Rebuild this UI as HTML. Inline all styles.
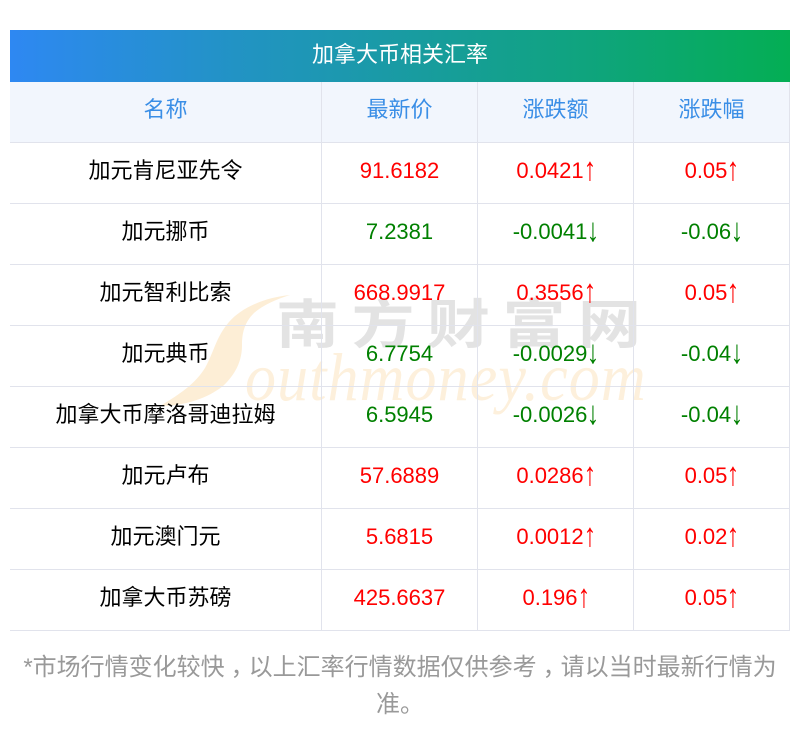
<!DOCTYPE html>
<html><head><meta charset="utf-8"><style>
html,body{margin:0;padding:0;background:#fff}
#p{position:relative;width:800px;height:733px;overflow:hidden;font-family:"Liberation Sans","Noto Sans CJK SC",sans-serif;font-size:22px}
#t{position:absolute;left:10px;top:30px;width:780px;height:52px;line-height:49px;text-align:center;color:#fff;background:linear-gradient(90deg,#2e88f2,#04ae54)}
#h{position:absolute;left:10px;top:82px;width:780px;height:60px;background:#f2f6fd}
.hl,.vl{position:absolute;background:#e1e3ec}
.hl{left:10px;width:780px;height:1px}
.vl{top:82px;width:1px;height:549px}
.c{position:absolute;text-align:center;white-space:nowrap;height:61px;line-height:56px}
.a{left:10px;width:311px}.b{left:322px;width:155px}.d{left:478px;width:155px}.e{left:634px;width:155px}
.hd{color:#3a8ee6}.r{color:#f00}.g{color:#008000}.k{color:#000}
.c i{display:inline-block;font-style:normal;transform:translateX(.5px) scale(1.15,1.5);transform-origin:50% 55%}
#wm{position:absolute;left:276px;top:280px;font-size:63px;font-weight:700;letter-spacing:12.5px;line-height:80px;color:#e3e3e3;white-space:nowrap;transform:scaleY(.84);transform-origin:0 72px}
#wm2{position:absolute;left:245px;top:345px;font-family:"Liberation Serif",serif;font-style:italic;font-size:62px;letter-spacing:1.1px;line-height:70px;color:#fdf0dc;white-space:nowrap;transform:scaleY(1.1);transform-origin:0 56px}
#n{position:absolute;left:0;top:649px;width:800px;text-align:center;color:#999;line-height:37px;font-size:24px;white-space:nowrap}
#n b{font-weight:400;position:relative;left:6px}
</style></head><body><div id="p">
<div id="h"></div>
<svg style="position:absolute;left:0;top:0" width="800" height="733"><path d="M290 295C268 297 243 306 229 322C216 337 214 352 205 368C195 384 180 394 160 406C185 406 208 398 223 386C238 372 242 358 242 345C242 332 245 322 254 313C263 305 277 299 290 295Z" fill="#fdeed6"/></svg>
<div id="wm">南方财富网</div>
<div id="wm2">outhmoney.com</div>
<div id="t">加拿大币相关汇率</div>
<div class="hl" style="top:142px"></div><div class="hl" style="top:203px"></div><div class="hl" style="top:264px"></div><div class="hl" style="top:325px"></div><div class="hl" style="top:386px"></div><div class="hl" style="top:447px"></div><div class="hl" style="top:508px"></div><div class="hl" style="top:569px"></div><div class="hl" style="top:630px"></div>
<div class="vl" style="left:321px"></div><div class="vl" style="left:477px"></div><div class="vl" style="left:633px"></div><div class="vl" style="left:789px"></div>
<div class="c a hd" style="top:82px">名称</div><div class="c b hd" style="top:82px">最新价</div><div class="c d hd" style="top:82px">涨跌额</div><div class="c e hd" style="top:82px">涨跌幅</div>
<div class="c a k" style="top:143px">加元肯尼亚先令</div><div class="c b r" style="top:143px">91.6182</div><div class="c d r" style="top:143px">0.0421<i>↑</i></div><div class="c e r" style="top:143px">0.05<i>↑</i></div>
<div class="c a k" style="top:204px">加元挪币</div><div class="c b g" style="top:204px">7.2381</div><div class="c d g" style="top:204px">-0.0041<i>↓</i></div><div class="c e g" style="top:204px">-0.06<i>↓</i></div>
<div class="c a k" style="top:265px">加元智利比索</div><div class="c b r" style="top:265px">668.9917</div><div class="c d r" style="top:265px">0.3556<i>↑</i></div><div class="c e r" style="top:265px">0.05<i>↑</i></div>
<div class="c a k" style="top:326px">加元典币</div><div class="c b g" style="top:326px">6.7754</div><div class="c d g" style="top:326px">-0.0029<i>↓</i></div><div class="c e g" style="top:326px">-0.04<i>↓</i></div>
<div class="c a k" style="top:387px">加拿大币摩洛哥迪拉姆</div><div class="c b g" style="top:387px">6.5945</div><div class="c d g" style="top:387px">-0.0026<i>↓</i></div><div class="c e g" style="top:387px">-0.04<i>↓</i></div>
<div class="c a k" style="top:448px">加元卢布</div><div class="c b r" style="top:448px">57.6889</div><div class="c d r" style="top:448px">0.0286<i>↑</i></div><div class="c e r" style="top:448px">0.05<i>↑</i></div>
<div class="c a k" style="top:509px">加元澳门元</div><div class="c b r" style="top:509px">5.6815</div><div class="c d r" style="top:509px">0.0012<i>↑</i></div><div class="c e r" style="top:509px">0.02<i>↑</i></div>
<div class="c a k" style="top:570px">加拿大币苏磅</div><div class="c b r" style="top:570px">425.6637</div><div class="c d r" style="top:570px">0.196<i>↑</i></div><div class="c e r" style="top:570px">0.05<i>↑</i></div>
<div id="n">*市场行情变化较快<b>，</b>以上汇率行情数据仅供参考<b>，</b>请以当时最新行情为<br>准。</div>
</div></body></html>
